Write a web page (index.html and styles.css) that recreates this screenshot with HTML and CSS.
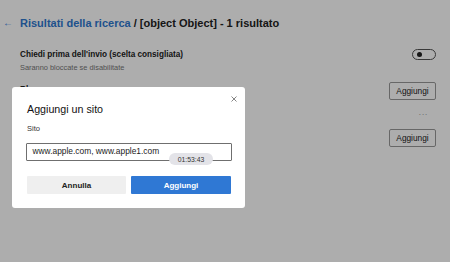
FILE: index.html
```html
<!DOCTYPE html>
<html lang="it">
<head>
<meta charset="utf-8">
<link rel="stylesheet" href="styles.css">
</head>
<body>
<div class="page">
  <div class="header">
    <span class="back">←</span>
    <h1 class="title"><span class="crumb">Risultati della ricerca</span> / [object Object] - 1 risultato</h1>
  </div>
  <div class="row row-toggle">
    <div class="row-text">
      <div class="row-title">Chiedi prima dell'invio (scelta consigliata)</div>
      <div class="row-sub">Saranno bloccate se disabilitate</div>
    </div>
    <span class="toggle"><span class="knob"></span></span>
  </div>
  <div class="row row-section">
    <div class="row-title section-title">Blocca</div>
    <button class="btn-outline">Aggiungi</button>
  </div>
  <div class="row row-more">
    <span class="more">···</span>
  </div>
  <div class="row row-section2">
    <div class="row-title section-title"></div>
    <button class="btn-outline">Aggiungi</button>
  </div>
</div>
<div class="overlay">
  <div class="dialog">
    <button class="close" aria-label="Chiudi">
      <svg width="6" height="6" viewBox="0 0 6 6"><path d="M0.5 0.5L5.5 5.5M5.5 0.5L0.5 5.5" stroke="#777" stroke-width="0.9" fill="none"/></svg>
    </button>
    <h2 class="dialog-title">Aggiungi un sito</h2>
    <label class="label">Sito</label>
    <div class="field">
      <div class="input">www.apple.com, www.apple1.com</div>
      <span class="pill">01:53:43</span>
    </div>
    <div class="actions">
      <button class="btn btn-cancel">Annulla</button>
      <button class="btn btn-primary">Aggiungi</button>
    </div>
  </div>
</div>
</body>
</html>
```
FILE: styles.css
```css
* { box-sizing: border-box; }
html, body { margin: 0; padding: 0; }
body {
  width: 450px;
  height: 262px;
  overflow: hidden;
  background: #ffffff;
  font-family: "Liberation Sans", Arial, sans-serif;
  color: #222;
}
.page {
  padding: 13px 14px 0 3px;
}
.header {
  display: flex;
  align-items: center;
  height: 20px;
  gap: 7px;
}
.back {
  color: #3d85e0;
  font-size: 10px;
  width: 10px;
  line-height: 20px;
}
.title {
  margin: 0;
  font-size: 11px;
  font-weight: 700;
  color: #222;
  line-height: 20px;
}
.crumb { color: #2f78cf; }
.row {
  display: flex;
  justify-content: space-between;
  align-items: flex-start;
  padding-left: 17px;
}
.row-toggle { margin-top: 17px; }
.row-title {
  font-size: 8.2px;
  font-weight: 700;
  color: #222;
  line-height: 10px;
}
.row-sub {
  font-size: 7.4px;
  color: #777;
  line-height: 9px;
  margin-top: 2.5px;
}
.toggle {
  width: 24px;
  height: 11px;
  border: 1px solid #555;
  border-radius: 6px;
  display: flex;
  align-items: center;
  padding-left: 3.5px;
  margin-top: -1px;
}
.knob {
  width: 5px;
  height: 5px;
  border-radius: 50%;
  background: #222;
}
.row-section { margin-top: 10.5px; }
.section-title { margin-top: 3px; }
.btn-outline {
  font-family: inherit;
  font-size: 8.3px;
  color: #222;
  background: #fff;
  border: 1px solid #999;
  border-radius: 2px;
  width: 47px;
  height: 18px;
  padding: 0;
}
.row-more {
  justify-content: flex-end;
  align-items: center;
  height: 29px;
}
.more { color: #888; font-size: 8px; padding-right: 8px; letter-spacing: 0.5px; }
.overlay {
  position: fixed;
  inset: 0;
  background: rgba(0, 0, 0, 0.32);
  padding: 87px 0 0 12px;
}
.dialog {
  position: relative;
  width: 233px;
  height: 121px;
  background: #fff;
  border-radius: 3px;
  padding: 15px 13px 0 15px;
}
.close {
  position: absolute;
  top: 9px;
  right: 8px;
  width: 6px;
  height: 6px;
  padding: 0;
  border: 0;
  background: none;
  display: flex;
}
.dialog-title {
  margin: 0;
  font-size: 10.7px;
  font-weight: 400;
  color: #111;
  line-height: 14px;
}
.label {
  display: block;
  margin-top: 8px;
  font-size: 7.5px;
  color: #333;
  line-height: 10px;
}
.field {
  position: relative;
  margin-top: 9px;
}
.input {
  height: 18px;
  border: 1.5px solid #6f6f6f;
  border-radius: 1px;
  font-size: 8.4px;
  color: #222;
  line-height: 14px;
  padding-left: 5.5px;
  margin-left: -1px;
}
.pill {
  position: absolute;
  left: 142px;
  top: 10px;
  width: 44px;
  height: 12px;
  border-radius: 6px;
  background: #e3e3e8;
  font-size: 6.8px;
  color: #333;
  display: flex;
  align-items: center;
  justify-content: center;
}
.actions {
  display: flex;
  gap: 5px;
  margin-top: 15px;
}
.btn {
  font-family: inherit;
  font-size: 8px;
  height: 18px;
  border: 0;
  border-radius: 1px;
  padding: 0;
}
.btn-cancel {
  width: 99px;
  background: #efefef;
  color: #222;
  font-weight: 700;
}
.btn-primary {
  width: 100px;
  background: #2f78d4;
  color: #fff;
  font-weight: 700;
}
```
